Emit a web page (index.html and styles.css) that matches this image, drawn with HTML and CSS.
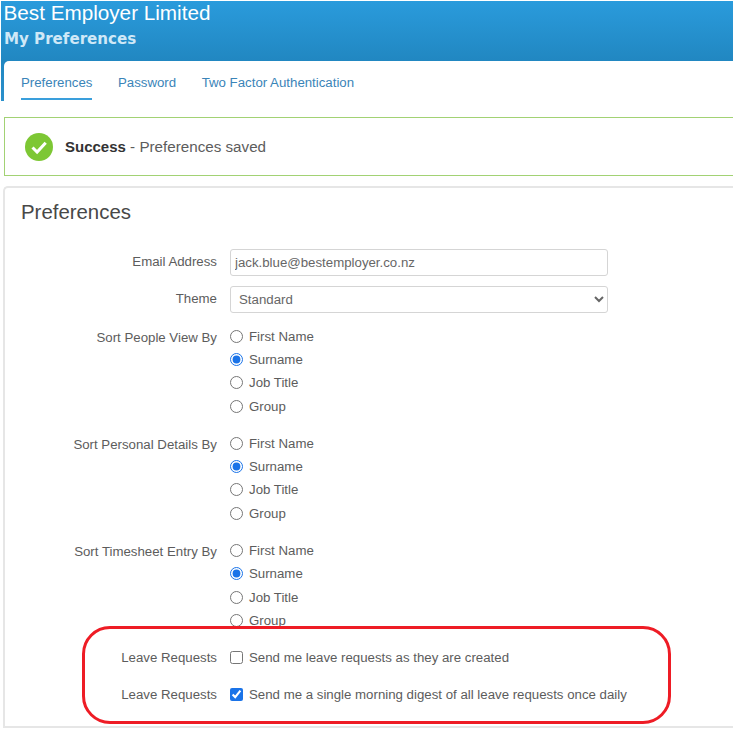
FILE: index.html
```html
<!DOCTYPE html>
<html lang="en">
<head>
<meta charset="UTF-8">
<meta name="viewport" content="width=device-width, initial-scale=1.0">
<title>My Preferences</title>
<link rel="stylesheet" href="styles.css">
</head>
<body>
<div class="page">
    <header class="banner">
        <div class="company">Best Employer Limited</div>
        <div class="page-name">My Preferences</div>
    </header>
    <div class="tabs-wrap">
        <nav class="tabs">
            <a class="tab active">Preferences</a>
            <a class="tab">Password</a>
            <a class="tab">Two Factor Authentication</a>
        </nav>
    </div>
    <div class="alert">
        <svg class="alert-icon" viewBox="0 0 28 28" width="28" height="28">
            <circle cx="14" cy="14" r="14" fill="#7dc734"/>
            <path d="M7.5 14.5l4.6 4.6 8.6-9.4" fill="none" stroke="#fff" stroke-width="3"/>
        </svg>
        <span><b>Success</b> - Preferences saved</span>
    </div>
    <section class="card">
        <h2>Preferences</h2>
        <div class="row row-field">
            <label class="label">Email Address</label>
            <input class="control" type="text" value="jack.blue@bestemployer.co.nz">
        </div>
        <div class="row row-field">
            <label class="label">Theme</label>
            <select class="control select"><option>Standard</option></select>
        </div>
        <div class="row row-options">
            <label class="label">Sort People View By</label>
            <div class="options">
                <label class="option"><input type="radio" name="people">First Name</label>
                <label class="option"><input type="radio" name="people" checked>Surname</label>
                <label class="option"><input type="radio" name="people">Job Title</label>
                <label class="option"><input type="radio" name="people">Group</label>
            </div>
        </div>
        <div class="row row-options">
            <label class="label">Sort Personal Details By</label>
            <div class="options">
                <label class="option"><input type="radio" name="personal">First Name</label>
                <label class="option"><input type="radio" name="personal" checked>Surname</label>
                <label class="option"><input type="radio" name="personal">Job Title</label>
                <label class="option"><input type="radio" name="personal">Group</label>
            </div>
        </div>
        <div class="row row-options">
            <label class="label">Sort Timesheet Entry By</label>
            <div class="options">
                <label class="option"><input type="radio" name="timesheet">First Name</label>
                <label class="option"><input type="radio" name="timesheet" checked>Surname</label>
                <label class="option"><input type="radio" name="timesheet">Job Title</label>
                <label class="option"><input type="radio" name="timesheet">Group</label>
            </div>
        </div>
        <div class="row row-check first-check">
            <label class="label">Leave Requests</label>
            <label class="option"><input type="checkbox">Send me leave requests as they are created</label>
        </div>
        <div class="row row-check">
            <label class="label">Leave Requests</label>
            <label class="option"><input type="checkbox" checked>Send me a single morning digest of all leave requests once daily</label>
        </div>
        <div class="highlight"></div>
    </section>
</div>
</body>
</html>
```

FILE: styles.css
```css
* {
    box-sizing: border-box;
}
html, body {
    height: 100%;
}
body {
    margin: 0;
    background-color: #fff;
    font-family: "Liberation Sans", Arial, sans-serif;
    font-size: 13.25px;
    color: #5c5c5c;
    overflow: hidden;
}
.page {
    width: 733px;
    height: 730px;
    padding-top: 1px;
}
.banner {
    height: 60px;
    margin-left: 1px;
    padding: 0 0 0 3px;
    background: linear-gradient(#2a9bdc, #2187c1);
    color: #fff;
}
.company {
    margin-left: -0.5px;
    font-size: 20.7px;
    line-height: 23px;
}
.page-name {
    margin-top: 5px;
    font-family: "DejaVu Sans", sans-serif;
    font-size: 15.1px;
    font-weight: bold;
    line-height: 20px;
    color: #cfe8f7;
}
.tabs-wrap {
    margin-left: 1px;
    padding-left: 3px;
    background: linear-gradient(#2187c1, #2a90cc);
}
.tabs {
    display: flex;
    gap: 25.5px;
    height: 40px;
    padding-left: 17px;
    background-color: #fff;
    border-top-left-radius: 5px;
}
.tab {
    height: 39px;
    padding-top: 14px;
    color: #3a84b8;
}
.tab.active {
    border-bottom: 2px solid #3a9fdc;
}
.alert {
    display: flex;
    align-items: center;
    gap: 12px;
    height: 59px;
    margin: 16px 0 0 4px;
    padding-left: 20px;
    border: 1px solid #a2d274;
    border-right: none;
    font-size: 15.2px;
    color: #5c5c5c;
}
.alert b {
    font-size: 15px;
    color: #333;
}
.card {
    position: relative;
    height: 542px;
    margin: 10px 0 0 3px;
    padding: 14px 0 0 16px;
    border: 2px solid #e6e6e6;
    border-right: none;
    border-radius: 5px 0 0 0;
}
.card h2 {
    margin: -1px 0 25px 0;
    font-size: 20.4px;
    font-weight: normal;
    line-height: 23px;
    color: #484848;
}
.row {
    display: flex;
}
.label {
    flex: none;
    width: 209px;
    padding-right: 13px;
    text-align: right;
}
.row-field {
    height: 37px;
}
.row-field .label {
    padding-top: 5px;
}
.row-field + .row-options {
    margin-top: 1.5px;
}
.control {
    width: 378px;
    height: 27px;
    padding: 0 4px;
    border: 1px solid #d5d5d5;
    border-radius: 3px;
    background-color: #fff;
    font-family: inherit;
    font-size: 13.25px;
    color: #666;
}
.row-options {
    margin-bottom: 13.8px;
}
.row-options .label {
    padding-top: 5px;
}
.options {
    display: flex;
    flex-direction: column;
}
.option {
    display: flex;
    align-items: center;
    height: 23.33px;
}
.option input {
    width: 13px;
    height: 13px;
    margin: 0 6px 0 0;
    accent-color: #1a73e8;
}
.row-check {
    height: 37px;
    align-items: center;
}
.first-check {
    margin-top: -6.5px;
}
.highlight {
    position: absolute;
    left: 77px;
    top: 438px;
    width: 589px;
    height: 98px;
    border: 3px solid #ee1c25;
    border-radius: 28px;
}
```
